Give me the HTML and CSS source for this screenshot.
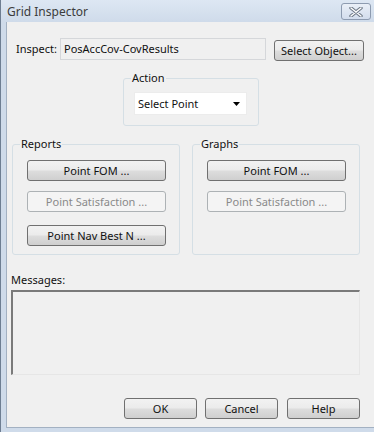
FILE: index.html
```html
<!DOCTYPE html>
<html lang="en">
<head>
    <meta charset="UTF-8">
    <meta name="viewport" content="width=device-width, initial-scale=1.0">
    <title>Grid Inspector</title>
    <link rel="stylesheet" href="styles.css">
</head>
<body>
   <div class="window">
      <div class="titlebar">
         <span class="title">Grid Inspector</span>
         <button type="button" class="close">
            <svg width="14" height="10" viewBox="0 0 14 10">
               <path d="M2 1 L12 9 M12 1 L2 9" stroke="#6d7886" stroke-width="3.4" stroke-linecap="round" fill="none"/>
               <path d="M2 1 L12 9 M12 1 L2 9" stroke="#ffffff" stroke-width="1.4" stroke-linecap="round" fill="none"/>
            </svg>
         </button>
      </div>
      <div class="frame">
         <div class="client">
            <div class="inspect-row">
               <label>Inspect:</label>
               <div class="field">PosAccCov-CovResults</div>
               <button type="button" class="btn select-obj">Select Object...</button>
            </div>

            <fieldset class="group action">
               <legend>Action</legend>
               <div class="combo">
                  <span>Select Point</span>
                  <svg width="7" height="4" viewBox="0 0 7 4"><path d="M0 0 H7 L3.5 4 Z" fill="#000"/></svg>
               </div>
            </fieldset>

            <div class="groups">
               <fieldset class="group panel">
                  <legend>Reports</legend>
                  <button type="button" class="btn">Point FOM ...</button>
                  <button type="button" class="btn second" disabled>Point Satisfaction ...</button>
                  <button type="button" class="btn third">Point Nav Best N ...</button>
               </fieldset>
               <fieldset class="group panel">
                  <legend>Graphs</legend>
                  <button type="button" class="btn">Point FOM ...</button>
                  <button type="button" class="btn second" disabled>Point Satisfaction ...</button>
               </fieldset>
            </div>

            <div class="messages-label">Messages:</div>
            <div class="messages"></div>

            <div class="footer">
               <button type="button" class="btn">OK</button>
               <button type="button" class="btn">Cancel</button>
               <button type="button" class="btn help">Help</button>
            </div>
         </div>
      </div>
   </div>
</body>
</html>
```

FILE: styles.css
```css
body {
    margin: 0;
    font-family: 'Noto Sans', 'Open Sans', sans-serif;
    font-size: 11px;
    color: #111;
    background-color: #f0f0f0;
}

.window {
    width: 374px;
    height: 432px;
    display: flex;
    flex-direction: column;
    border-left: 1px solid #6e7e92;
    box-sizing: border-box;
    background-color: #cfdbea; /* frame colour */
}

.titlebar {
    height: 22px;
    flex-shrink: 0;
    display: flex;
    align-items: center;
    justify-content: space-between;
    padding: 0 3px 0 6px;
    background: linear-gradient(#dde7f3, #cfdbea);
}

.title {
    font-size: 12px;
    color: #3c3c3c;
}

.close {
    width: 30px;
    height: 17px;
    margin-top: 1px;
    padding: 0;
    display: flex;
    align-items: center;
    justify-content: center;
    border: 1px solid #8d9bb0;
    border-radius: 3px;
    background: linear-gradient(#e9eff7, #d3dded);
}

.frame {
    flex: 1;
    display: flex;
    padding: 0 0 4px 5px;
}

.client {
    flex: 1;
    display: flex;
    flex-direction: column;
    background-color: #f0f0f0;
    border-left: 1px solid #a3b1c2;
    border-bottom: 1px solid #a3b1c2;
    padding-left: 4px;
}

.inspect-row {
    display: flex;
    align-items: flex-start;
    margin-top: 16px;
    line-height: 20px;
}

.inspect-row label {
    margin: 1px 0 0 5px;
    width: 44px;
}

.field {
    width: 201px;
    height: 20px;
    padding-left: 3px;
    border: 1px solid #d5d7da;
    background-color: #f0f0f0;
}

.btn {
    font-family: inherit;
    font-size: 11px;
    color: #111;
    height: 21px;
    padding: 0;
    border: 1px solid #707070;
    border-radius: 3px;
    background: linear-gradient(#f2f2f2 0%, #ebebeb 48%, #dddddd 52%, #cfcfcf 100%);
}

.btn:disabled {
    color: #8a8a8a;
    border-color: #adb2b5;
    background: #f4f4f4;
}

.select-obj {
    width: 90px;
    margin: 2px 0 0 8px;
}

.group {
    margin: 0;
    border: 1px solid #d5dfe5;
    border-radius: 3px;
    padding: 0 0 0 7px;
}

.group legend {
    padding: 0 1px;
    line-height: 14px;
}

.action {
    width: 136px;
    box-sizing: border-box;
    margin: 10px 0 0 112px;
    padding-bottom: 10px;
}

.combo {
    width: 113px;
    height: 23px;
    box-sizing: border-box;
    margin: 7px 0 0 3px;
    padding: 0 6px 0 3px;
    display: flex;
    align-items: center;
    justify-content: space-between;
    background-color: #fff;
    border: 1px solid #ececec;
}

.groups {
    display: flex;
    gap: 12px;
    margin-top: 11px;
    padding-left: 1px;
}

.panel {
    width: 168px;
    height: 118px;
    box-sizing: border-box;
    display: flex;
    flex-direction: column;
    align-items: flex-start;
}

.panel .btn {
    width: 139px;
    margin-left: 7px;
}

.panel .btn:first-of-type {
    margin-top: 9px;
}

.panel .second {
    margin-top: 10px;
}

.panel .third {
    margin-top: 13px;
}

.messages-label {
    margin-top: 18px;
    line-height: 14px;
}

.messages {
    width: 349px;
    height: 85px;
    box-sizing: border-box;
    margin-top: 3px;
    border-style: solid;
    border-width: 2px 1px 1px 2px;
    border-color: #7a7a7a #e6e6e6 #e6e6e6 #7a7a7a;
}

.footer {
    display: flex;
    justify-content: flex-end;
    gap: 8px;
    margin-top: 23px;
    padding-right: 14px;
}

.footer .btn {
    width: 73px;
}

.footer .help {
    margin-left: 1px;
}
```
